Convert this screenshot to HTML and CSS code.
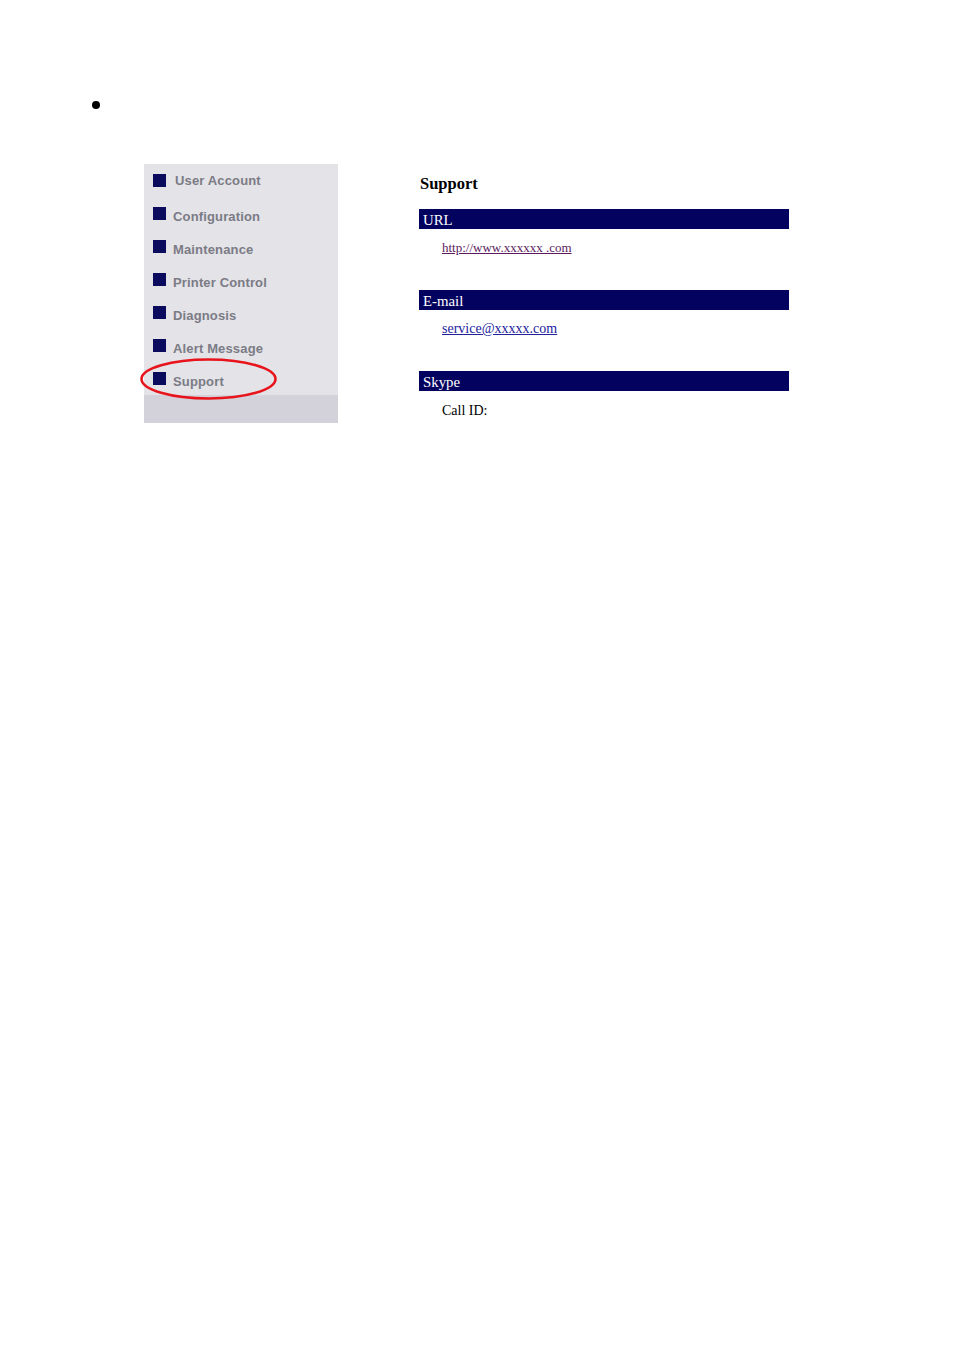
FILE: index.html
```html
<!DOCTYPE html>
<html>
<head>
<meta charset="utf-8">
<link rel="stylesheet" href="styles.css">
</head>
<body>
<div class="page">
  <div class="bullet-row"><span class="bullet"></span></div>
  <div class="figure">
    <div class="sidebar">
      <ul class="menu">
        <li class="item first"><span class="sq"></span><span class="label">User Account</span></li>
        <li class="item"><span class="sq"></span><span class="label">Configuration</span></li>
        <li class="item"><span class="sq"></span><span class="label">Maintenance</span></li>
        <li class="item"><span class="sq"></span><span class="label">Printer Control</span></li>
        <li class="item"><span class="sq"></span><span class="label">Diagnosis</span></li>
        <li class="item"><span class="sq"></span><span class="label">Alert Message</span></li>
        <li class="item active"><span class="sq"></span><span class="label">Support</span>
          <svg class="ring" width="142" height="46" viewBox="0 0 142 46"><ellipse cx="69.5" cy="22" rx="67" ry="19.5" fill="none" stroke="#e8141c" stroke-width="2.6"/></svg>
        </li>
      </ul>
      <div class="band"></div>
    </div>
    <div class="panel">
      <h2 class="title">Support</h2>
      <div class="section">
        <div class="bar">URL</div>
        <div class="content"><a class="link visited" href="#">http://www.xxxxxx .com</a></div>
      </div>
      <div class="section">
        <div class="bar">E-mail</div>
        <div class="content"><a class="link mail" href="#">service@xxxxx.com</a></div>
      </div>
      <div class="section">
        <div class="bar">Skype</div>
        <div class="content plain">Call ID:</div>
      </div>
    </div>
  </div>
</div>
</body>
</html>
```

FILE: styles.css
```css
html, body {
  margin: 0;
  padding: 0;
  background: #ffffff;
}

.page {
  padding-top: 101px;
}

.bullet-row {
  padding-left: 92px;
  height: 8px;
}

.bullet {
  display: block;
  width: 8px;
  height: 8px;
  border-radius: 50%;
  background: #000000;
}

.figure {
  display: flex;
  margin-top: 55px;
  padding-left: 144px;
}

.sidebar {
  width: 194px;
  background: #e3e3e8;
  align-self: flex-start;
}

.menu {
  list-style: none;
  margin: 0;
  padding: 0;
}

.item {
  position: relative;
  height: 33px;
  display: flex;
  align-items: center;
  padding-left: 9px;
  gap: 7px;
  font-family: "Liberation Sans", Arial, sans-serif;
  font-weight: bold;
  font-size: 13px;
  letter-spacing: 0.15px;
  color: #7b7b85;
}

.item.first {
  gap: 9px;
}

.sq {
  display: block;
  width: 13px;
  height: 13px;
  background: #0b0b5e;
  flex: none;
}

.label {
  line-height: 16px;
  padding-top: 6px;
}

.item.first .label {
  padding-top: 1px;
}

.ring {
  position: absolute;
  left: -5px;
  top: -5px;
}

.band {
  height: 28px;
  background: #d3d1da;
}

.panel {
  margin-left: 81px;
  width: 370px;
  padding-top: 10px;
  font-family: "Liberation Serif", "Times New Roman", serif;
}

.title {
  margin: 0 0 15px 1px;
  font-size: 16.5px;
  line-height: 20px;
  font-weight: bold;
  color: #000000;
}

.section {
  height: 81px;
}

.bar {
  height: 20px;
  line-height: 22px;
  background: #03035f;
  color: #ffffff;
  font-size: 14.8px;
  padding-left: 4px;
}

.content {
  padding-left: 23px;
  padding-top: 10px;
  line-height: 16px;
}

.link {
  font-size: 13px;
  text-decoration: underline;
}

.link.visited {
  color: #5b1b5e;
}

.link.mail {
  color: #22229c;
  font-size: 14px;
}

.plain {
  padding-top: 12px;
  font-size: 14px;
  color: #000000;
}
```
